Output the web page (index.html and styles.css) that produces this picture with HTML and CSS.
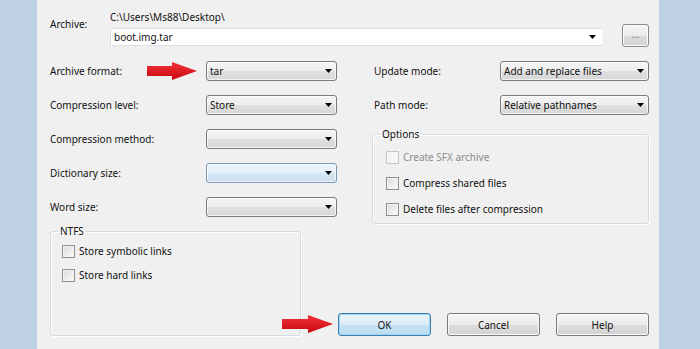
FILE: index.html
```html
<!DOCTYPE html>
<html lang="en">
<head>
    <meta charset="UTF-8">
    <meta name="viewport" content="width=device-width, initial-scale=1.0">
    <title>Add to Archive</title>
    <link rel="stylesheet" href="styles.css">
</head>
<body>
    <div class="strip strip-left"></div>

    <div class="dialog">
        <div class="archive-row">
            <div class="archive-label">Archive:</div>
            <div class="archive-path">
                <div class="path-text">C:\Users\Ms88\Desktop\</div>
                <div class="combo-edit">
                    <span>boot.img.tar</span>
                    <svg class="drop" width="7" height="4" viewBox="0 0 7 4"><path d="M0 0h7L3.5 4z" fill="#000"/></svg>
                </div>
            </div>
            <button class="browse-btn">...</button>
        </div>

        <div class="columns">
            <div class="col-left">
                <div class="form-row">
                    <span class="label">Archive format:</span>
                    <svg class="red-arrow" width="50" height="18" viewBox="0 0 50 18">
                        <defs>
                            <linearGradient id="ra" x1="0" y1="0" x2="0" y2="1">
                                <stop offset="0" stop-color="#f2343a"/>
                                <stop offset="1" stop-color="#c8070e"/>
                            </linearGradient>
                        </defs>
                        <path d="M0 4h25V0l25 9-25 9v-4H0z" fill="url(#ra)"/>
                    </svg>
                    <div class="combo"><span>tar</span><svg class="drop" width="7" height="4" viewBox="0 0 7 4"><path d="M0 0h7L3.5 4z" fill="#000"/></svg></div>
                </div>
                <div class="form-row">
                    <span class="label">Compression level:</span>
                    <div class="combo"><span>Store</span><svg class="drop" width="7" height="4" viewBox="0 0 7 4"><path d="M0 0h7L3.5 4z" fill="#000"/></svg></div>
                </div>
                <div class="form-row">
                    <span class="label">Compression method:</span>
                    <div class="combo"><span></span><svg class="drop" width="7" height="4" viewBox="0 0 7 4"><path d="M0 0h7L3.5 4z" fill="#000"/></svg></div>
                </div>
                <div class="form-row">
                    <span class="label">Dictionary size:</span>
                    <div class="combo combo-hot"><span></span><svg class="drop" width="7" height="4" viewBox="0 0 7 4"><path d="M0 0h7L3.5 4z" fill="#000"/></svg></div>
                </div>
                <div class="form-row">
                    <span class="label">Word size:</span>
                    <div class="combo"><span></span><svg class="drop" width="7" height="4" viewBox="0 0 7 4"><path d="M0 0h7L3.5 4z" fill="#000"/></svg></div>
                </div>
            </div>

            <div class="col-right">
                <div class="form-row">
                    <span class="label">Update mode:</span>
                    <div class="combo combo-wide"><span>Add and replace files</span><svg class="drop" width="7" height="4" viewBox="0 0 7 4"><path d="M0 0h7L3.5 4z" fill="#000"/></svg></div>
                </div>
                <div class="form-row">
                    <span class="label">Path mode:</span>
                    <div class="combo combo-wide"><span>Relative pathnames</span><svg class="drop" width="7" height="4" viewBox="0 0 7 4"><path d="M0 0h7L3.5 4z" fill="#000"/></svg></div>
                </div>
                <fieldset class="group options-group">
                    <legend>Options</legend>
                    <div class="group-body">
                        <label class="check disabled"><span class="box"></span>Create SFX archive</label>
                        <label class="check"><span class="box"></span>Compress shared files</label>
                        <label class="check"><span class="box"></span>Delete files after compression</label>
                    </div>
                </fieldset>
            </div>
        </div>

        <div class="bottom">
            <fieldset class="group ntfs-group">
                <legend>NTFS</legend>
                <div class="group-body">
                    <label class="check"><span class="box"></span>Store symbolic links</label>
                    <label class="check"><span class="box"></span>Store hard links</label>
                </div>
            </fieldset>
            <div class="buttons">
                <svg class="red-arrow-ok" width="51" height="18" viewBox="0 0 51 18">
                    <defs>
                        <linearGradient id="rb" x1="0" y1="0" x2="0" y2="1">
                            <stop offset="0" stop-color="#f2343a"/>
                            <stop offset="1" stop-color="#c8070e"/>
                        </linearGradient>
                    </defs>
                    <path d="M0 4h26V0l25 9-25 9v-4H0z" fill="url(#rb)"/>
                </svg>
                <button class="btn btn-default">OK</button>
                <button class="btn">Cancel</button>
                <button class="btn">Help</button>
            </div>
        </div>
    </div>

    <div class="strip strip-right"></div>
</body>
</html>
```

FILE: styles.css
```css
body {
    margin: 0;
    padding: 0;
    display: flex;
    height: 349px;
    overflow: hidden;
    font-family: "Noto Sans", "Liberation Sans", Arial, sans-serif;
    font-size: 10px;
    color: #111;
}
.strip {
    background-color: #bfd2e3;
}
.strip-left {
    width: 37px;
}
.strip-right {
    width: 41px;
}
.dialog {
    width: 622px;
    background-color: #f0f0f0;
    padding: 0 10px 0 13px;
    box-sizing: border-box;
}

/* archive name row */
.archive-row {
    display: flex;
    padding-top: 10px;
}
.archive-label {
    width: 60px;
    margin-top: 7px;
    line-height: 14px;
}
.archive-path {
    width: 493px;
}
.path-text {
    line-height: 14px;
}
.combo-edit {
    margin-top: 4px;
    height: 16px;
    background-color: #fff;
    border: 1px solid #dedede;
    border-right-color: #f4f4f4;
    display: flex;
    align-items: center;
    justify-content: space-between;
    padding: 0 6px 0 3px;
}
.browse-btn {
    margin: 14px 0 0 19px;
    width: 27px;
    height: 23px;
    padding: 0 0 3px;
    border: 1px solid #8a8a8a;
    border-radius: 3px;
    background: linear-gradient(#f6f6f6, #ececec 50%, #dcdcdc 51%, #d3d3d3);
    color: #808080;
    font: inherit;
    font-size: 10px;
    box-shadow: inset 0 0 0 1px #fcfcfc;
}

/* two columns of settings */
.columns {
    display: flex;
    margin-top: 14px;
}
.col-left {
    width: 287px;
}
.col-right {
    width: 277px;
    margin-left: 35px;
}
.form-row {
    display: flex;
    align-items: center;
    height: 20px;
    margin-bottom: 14px;
}
.col-left .form-row:last-child {
    margin-bottom: 0;
}
.col-right .form-row {
    padding-left: 2px;
}
.col-right .form-row:nth-child(2) {
    margin-bottom: 0;
}
.label {
    flex: 1;
}
.red-arrow {
    margin-right: 9px;
}
.combo {
    width: 131px;
    height: 20px;
    box-sizing: border-box;
    border: 1px solid #7a7a7a;
    border-radius: 3px;
    background: linear-gradient(#f5f5f5, #ededed 50%, #e0e0e0 51%, #d6d6d6);
    box-shadow: inset 0 0 0 1px rgba(255, 255, 255, 0.7);
    display: flex;
    align-items: center;
    justify-content: space-between;
    padding: 0 4px 0 3px;
}
.combo-wide {
    width: 149px;
}
.combo-hot {
    border-color: #7b98b5;
    background: linear-gradient(#eef5fb, #e4eff8 50%, #d5e6f4 51%, #cddff0);
}
.drop {
    flex-shrink: 0;
}

/* group boxes */
.group {
    margin: 0;
    padding: 0;
    border: 1px solid #d5dbe0;
    border-radius: 3px;
    box-shadow: inset 1px 1px 0 #fff, 1px 1px 0 #fff;
}
.group legend {
    margin-left: 7px;
    padding: 0 2px;
    line-height: 14px;
}
.options-group {
    margin-top: 12px;
}
.options-group .group-body {
    padding: 8px 0 6px 13px;
}
.options-group .check {
    margin-bottom: 10px;
}
.options-group .check:last-child {
    margin-bottom: 0;
}
.ntfs-group {
    width: 252px;
    box-sizing: border-box;
}
.ntfs-group .group-body {
    height: 94px;
    box-sizing: border-box;
    padding: 5px 0 0 11px;
}
.ntfs-group .check {
    margin-bottom: 8px;
}
.check {
    display: flex;
    align-items: center;
    height: 16px;
}
.box {
    width: 11px;
    height: 11px;
    border: 1px solid #8f8f8f;
    background: linear-gradient(135deg, #dcdcdc, #fbfbfb);
    box-shadow: inset 0 0 0 1px #f4f4f4;
    margin-right: 4px;
}
.check.disabled {
    color: #8d8d8d;
}
.check.disabled .box {
    border-color: #c6c6c6;
    background: #f6f6f6;
}

/* bottom: NTFS box and dialog buttons */
.bottom {
    display: flex;
}
.buttons {
    position: relative;
    display: flex;
    gap: 16px;
    margin: 89px 0 0 37px;
}
.red-arrow-ok {
    position: absolute;
    left: -56px;
    top: 2px;
}
.btn {
    width: 93px;
    height: 23px;
    border: 1px solid #7a7a7a;
    border-radius: 3px;
    background: linear-gradient(#f4f4f4, #ececec 50%, #dedede 51%, #d2d2d2);
    box-shadow: inset 0 0 0 1px #fbfbfb;
    font: inherit;
    color: #111;
    padding: 0;
}
.btn-default {
    border-color: #3c7fb1;
    background: linear-gradient(#e8f4fb, #dcedf8 50%, #c6e3f5 51%, #b9dcf2);
    box-shadow: inset 0 0 0 1px #9fd3f0;
}
```
